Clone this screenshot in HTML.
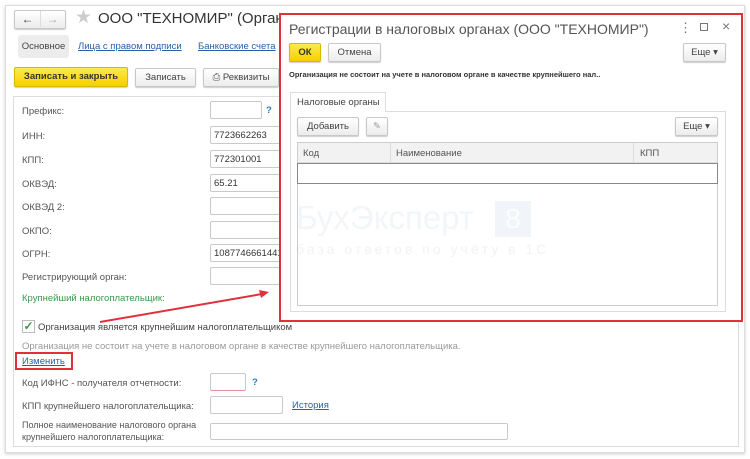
<!DOCTYPE html><html><head><meta charset="utf-8"><style>
*{box-sizing:border-box;margin:0;padding:0}
body{width:750px;height:459px;background:#fff;font-family:"Liberation Sans",sans-serif;font-size:9.5px;color:#444;position:relative;overflow:hidden}
.a{position:absolute;white-space:nowrap}
.btn{position:absolute;border:1px solid #c8c8c8;border-radius:2px;background:linear-gradient(#fff,#ececec);text-align:center;color:#444;box-shadow:0 1px 1px #ccc}
.y{background:linear-gradient(#ffe94d,#f5d000);border-color:#d8b800;color:#333;font-weight:bold}
.in{position:absolute;border:1px solid #c9c9c9;border-radius:2px;background:#fff;height:18px;padding:3px 3px;font-size:9.5px;color:#333}
.l{position:absolute;left:22px;font-size:9.5px;color:#555}
.lk{color:#2a5fa8;text-decoration:underline}
</style></head><body>
<div class="a" style="left:5px;top:5px;width:740px;height:448px;border:1px solid #ddd;box-shadow:0 1px 3px #ccc"></div>
<div class="a" style="left:13px;top:96px;width:726px;height:351px;border:1px solid #ddd"></div>
<div class="btn" style="left:14px;top:10px;width:52px;height:19px;font-size:12px;line-height:16px"><span style="display:inline-block;width:25px;border-right:1px solid #ddd">&#8592;</span><span style="display:inline-block;width:24px;color:#aaa">&#8594;</span></div>
<div class="a" style="left:75px;top:6px;font-size:19px;color:#ccc">&#9733;</div>
<div class="a" style="left:98px;top:10px;font-size:15px;color:#333">ООО "ТЕХНОМИР" (Организа</div>
<div class="a" style="left:18px;top:35px;width:51px;height:23px;background:#ececec;border-radius:3px;line-height:23px;text-align:center;color:#444">Основное</div>
<div class="a lk" style="left:78px;top:41px">Лица с правом подписи</div>
<div class="a lk" style="left:198px;top:41px">Банковские счета</div>
<div class="btn y" style="left:14px;top:67px;width:114px;height:20px;line-height:18px">Записать и закрыть</div>
<div class="btn" style="left:135px;top:68px;width:61px;height:19px;line-height:17px">Записать</div>
<div class="btn" style="left:203px;top:68px;width:76px;height:19px;line-height:17px"><span style="color:#555">&#9113;</span> Реквизиты</div>
<div class="l" style="top:106px">Префикс:</div><div class="in" style="left:210px;top:101px;width:52px"></div><div class="a" style="left:266px;top:105px;color:#2a7ac0;font-weight:bold">?</div>
<div class="l" style="top:131px">ИНН:</div><div class="in" style="left:210px;top:126px;width:70px">7723662263</div>
<div class="l" style="top:155px">КПП:</div><div class="in" style="left:210px;top:150px;width:70px">772301001</div>
<div class="l" style="top:179px">ОКВЭД:</div><div class="in" style="left:210px;top:174px;width:70px">65.21</div>
<div class="l" style="top:202px">ОКВЭД 2:</div><div class="in" style="left:210px;top:197px;width:70px"></div>
<div class="l" style="top:226px">ОКПО:</div><div class="in" style="left:210px;top:221px;width:70px"></div>
<div class="l" style="top:249px">ОГРН:</div><div class="in" style="left:210px;top:244px;width:70px;overflow:hidden">1087746661441</div>
<div class="l" style="top:272px">Регистрирующий орган:</div><div class="in" style="left:210px;top:267px;width:70px"></div>
<div class="l" style="top:293px;color:#3a9a4a">Крупнейший налогоплательщик:</div>
<div class="a" style="left:22px;top:320px;width:13px;height:13px;border:1px solid #bbb;background:#fff;color:#3a9a4a;font-size:12px;line-height:11px;text-align:center;font-weight:bold">&#10003;</div>
<div class="a" style="left:38px;top:322px;color:#444">Организация является крупнейшим налогоплательщиком</div>
<div class="a" style="left:22px;top:341px;color:#999">Организация не состоит на учете в налоговом органе в качестве крупнейшего налогоплательщика.</div>
<div class="a" style="left:15px;top:352px;width:58px;height:18px;border:2px solid #e0303a"></div>
<div class="a lk" style="left:22px;top:356px">Изменить</div>
<div class="l" style="top:378px">Код ИФНС - получателя отчетности:</div><div class="in" style="left:210px;top:373px;width:36px;border-bottom-color:#e09090"></div><div class="a" style="left:252px;top:377px;color:#2a7ac0;font-weight:bold">?</div>
<div class="l" style="top:401px">КПП крупнейшего налогоплательщика:</div><div class="in" style="left:210px;top:396px;width:73px"></div><div class="a lk" style="left:292px;top:400px">История</div>
<div class="l" style="top:419px;line-height:12px;font-size:9px">Полное наименование налогового органа<br>крупнейшего налогоплательщика:</div><div class="in" style="left:210px;top:423px;width:298px;height:17px"></div>
<svg class="a" style="left:0;top:0" width="750" height="459"><line x1="100" y1="322" x2="262" y2="294" stroke="#e0303a" stroke-width="2"/><polygon points="269,292 259,290 261,298" fill="#e0303a"/></svg>
<div class="a" style="left:279px;top:13px;width:464px;height:309px;border:2px solid #e0303a;background:#fff"></div>
<div class="a" style="left:289px;top:21px;font-size:14px;color:#555">Регистрации в налоговых органах (ООО "ТЕХНОМИР")</div>
<div class="a" style="left:679px;top:20px;font-size:13px;color:#777">&#8942;</div>
<div class="a" style="left:700px;top:23px;width:8px;height:8px;border:1px solid #777"></div>
<div class="a" style="left:722px;top:18px;font-size:14px;color:#777">&#215;</div>
<div class="btn y" style="left:289px;top:43px;width:32px;height:19px;line-height:17px">ОК</div>
<div class="btn" style="left:328px;top:43px;width:53px;height:19px;line-height:17px">Отмена</div>
<div class="btn" style="left:683px;top:43px;width:43px;height:19px;line-height:17px">Еще ▾</div>
<div class="a" style="left:289px;top:70px;font-size:7.5px;font-weight:bold;color:#333">Организация не состоит на учете в налоговом органе в качестве крупнейшего нал..</div>
<div class="a" style="left:290px;top:111px;width:436px;height:201px;border:1px solid #ddd"></div>
<div class="a" style="left:290px;top:92px;width:96px;height:20px;border:1px solid #ddd;border-bottom:none;background:#fff;padding:4px 6px;color:#444">Налоговые органы</div>
<div class="btn" style="left:297px;top:117px;width:62px;height:19px;line-height:17px">Добавить</div>
<div class="btn" style="left:366px;top:117px;width:22px;height:19px;line-height:17px;color:#999">&#9998;</div>
<div class="btn" style="left:675px;top:117px;width:43px;height:19px;line-height:17px">Еще ▾</div>
<div class="a" style="left:297px;top:142px;width:421px;height:164px;border:1px solid #ccc"></div>
<div class="a" style="left:298px;top:143px;width:419px;height:20px;background:#f2f2f2;border-bottom:1px solid #ddd"></div>
<div class="a" style="left:390px;top:143px;width:1px;height:20px;background:#ddd"></div>
<div class="a" style="left:633px;top:143px;width:1px;height:20px;background:#ddd"></div>
<div class="a" style="left:303px;top:148px;color:#555">Код</div>
<div class="a" style="left:396px;top:148px;color:#555">Наименование</div>
<div class="a" style="left:640px;top:148px;color:#555">КПП</div>
<div class="a" style="left:297px;top:163px;width:421px;height:21px;border:1px solid #888"></div>
<div class="a" style="left:296px;top:199px;font-size:33px;color:rgba(160,180,200,.12)">БухЭксперт</div>
<div class="a" style="left:495px;top:201px;width:36px;height:36px;background:rgba(120,160,200,.1);color:rgba(255,255,255,.8);font-size:28px;text-align:center;line-height:36px">8</div>
<div class="a" style="left:296px;top:241px;font-size:14px;letter-spacing:3px;color:rgba(160,170,190,.15)">база ответов по учёту в 1С</div>
</body></html>
